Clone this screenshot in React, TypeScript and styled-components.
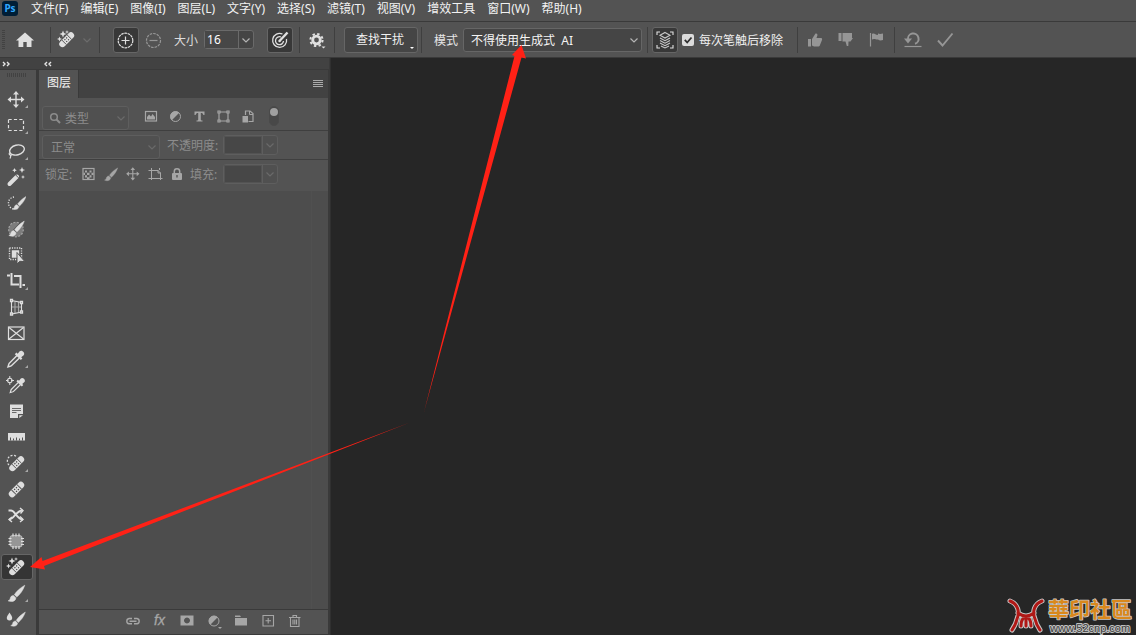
import React from "react";
import styled, { createGlobalStyle, css } from "styled-components";

const Global = createGlobalStyle`
  * { box-sizing: border-box; }
  body { margin: 0; background: #262626; }
  body, button, input, select {
    font-family: "Noto Sans", "Noto Sans CJK SC", sans-serif;
    font-size: 12px;
  }
  button { padding: 0; margin: 0; border: 0; background: none; color: inherit; }
`;

const App = styled.div`
  position: relative;
  display: flex;
  flex-direction: column;
  min-height: 100vh;
  overflow: hidden;
  color: #e6e6e6;
  background: #262626;
`;

/* ---------- menu bar ---------- */
const MenuBar = styled.header`
  display: flex;
  align-items: center;
  height: 22px;
  padding: 0 2px 4px;
  background: #535353;
  border-bottom: 1px solid #3a3a3a;
  flex: none;
`;
const AppBadge = styled.span`
  width: 16px;
  height: 15px;
  margin-right: 13px;
  border-radius: 3px;
  background: #001e36;
  color: #31a8ff;
  font: bold 10px/15px "Noto Sans", sans-serif;
  text-align: center;
`;
const Menus = styled.nav`
  display: flex;
  gap: 12px;
`;
const MenuItem = styled.button`
  line-height: 16px;
  white-space: nowrap;
  color: #f2f2f2;
`;

/* ---------- options bar ---------- */
const OptionsBar = styled.div`
  display: flex;
  align-items: center;
  height: 36px;
  background: #535353;
  border-bottom: 1px solid #3a3a3a;
  flex: none;
`;
const Group = styled.div<{ $pad: string; $gap?: number; $last?: boolean }>`
  display: flex;
  align-items: center;
  height: 26px;
  flex: none;
  padding: ${(p) => p.$pad};
  gap: ${(p) => p.$gap ?? 0}px;
  border-right: ${(p) => (p.$last ? "0" : "1px solid #3f3f3f")};
`;
const Grip = styled.span`
  width: 3px;
  height: 20px;
  background: repeating-linear-gradient(#424242 0 1px, transparent 1px 2px);
`;
const IconButton = styled.button<{ $on?: boolean; $wide?: boolean; $dim?: boolean }>`
  display: flex;
  align-items: center;
  justify-content: center;
  width: ${(p) => (p.$wide ? 26 : 20)}px;
  height: 26px;
  flex: none;
  border-radius: 3px;
  color: ${(p) => (p.$dim ? "#969696" : "#e0e0e0")};
  ${(p) =>
    p.$on &&
    css`
      background: #383838;
      border: 1px solid #666;
    `}
`;
const Field = styled.label`
  display: flex;
  align-items: center;
  gap: 6px;
  margin: 0 12px 0 7px;
  color: #dcdcdc;
  white-space: nowrap;
`;
const Combo = styled.span<{ $w: number; $dim?: boolean }>`
  display: flex;
  width: ${(p) => p.$w}px;
  height: ${(p) => (p.$dim ? 20 : 19)}px;
  border: 1px solid ${(p) => (p.$dim ? "#5e5e5e" : "#6a6a6a")};
  border-radius: 3px;
  background: ${(p) => (p.$dim ? "#505050" : "#454545")};
  input {
    flex: 1;
    min-width: 0;
    height: 100%;
    padding: 0 2px;
    border: ${(p) => (p.$dim ? "1px solid #535353" : "0")};
    background: #474747;
    color: #fff;
    outline: 0;
  }
  button {
    display: flex;
    align-items: center;
    justify-content: center;
    width: 15px;
    border-left: 1px solid ${(p) => (p.$dim ? "#5e5e5e" : "#6a6a6a")};
  }
`;
const PushButton = styled.button`
  display: flex;
  align-items: center;
  justify-content: center;
  position: relative;
  width: 74px;
  height: 26px;
  padding-bottom: 1px;
  padding-right: 2px;
  border: 1px solid #666;
  border-radius: 3px;
  background: #454545;
  color: #f0f0f0;
`;
const Corner = styled.i`
  position: absolute;
  right: 3px;
  bottom: 3px;
  border-top: 2px solid #fff;
  border-left: 2px solid transparent;
  border-right: 2px solid transparent;
`;
const SelectBox = styled.span<{ $w: number; $dim?: boolean }>`
  display: grid;
  align-items: center;
  width: ${(p) => p.$w}px;
  height: 24px;
  flex: none;
  color: ${(p) => (p.$dim ? "#8c8c8c" : "#f4f4f4")};
  > * { grid-area: 1 / 1; }
  > svg:last-child { justify-self: end; margin-right: 3px; pointer-events: none; }
  > svg:nth-last-child(3) { z-index: 1; margin-left: 4px; }
`;
const Select = styled.select<{ $pl: number; $dim?: boolean }>`
  appearance: none;
  width: 100%;
  height: 24px;
  padding: ${(p) => (p.$dim ? 0 : 2)}px 0 0 ${(p) => p.$pl}px;
  border: 1px solid ${(p) => (p.$dim ? "#5e5e5e" : "#666")};
  border-radius: 3px;
  background: ${(p) => (p.$dim ? "#505050" : "#454545")};
  color: inherit;
`;
const CheckLabel = styled.label`
  display: flex;
  align-items: center;
  gap: 5px;
  white-space: nowrap;
  color: #f0f0f0;
  input {
    appearance: none;
    width: 12px;
    height: 12px;
    margin: 0;
    border-radius: 2px;
    background: #dcdcdc;
  }
`;
const Tick = styled.span`
  display: grid;
  > * { grid-area: 1 / 1; }
  svg { pointer-events: none; }
`;

/* ---------- work area ---------- */
const Work = styled.div`
  display: flex;
  flex: 1;
`;
const Docks = styled.div`
  display: grid;
  grid-template-columns: 36px 291px;
  grid-template-rows: 12px 1fr;
  column-gap: 2px;
  flex: none;
  padding-right: 1px;
  background: #3a3a3a;
  border-right: 1px solid #303030;
`;
const DockHead = styled.div`
  display: flex;
  align-items: center;
  grid-column: 1 / 3;
  gap: 31px;
  height: 11px;
  padding-left: 2px;
  background: #424242;
`;
const Tools = styled.aside`
  display: flex;
  flex-direction: column;
  background: #535353;
  padding-left: 1px;
`;
const ToolsGrip = styled.span`
  width: 20px;
  height: 4px;
  margin: 3px 0 9px 6px;
  background: repeating-linear-gradient(90deg, #424242 0 1px, transparent 1px 2px);
`;
const Tool = styled.button<{ $on?: boolean; $more?: boolean }>`
  display: flex;
  align-items: center;
  justify-content: center;
  position: relative;
  width: 32px;
  height: 26px;
  flex: none;
  padding-right: 2px;
  color: #dedede;
  border: 1px solid ${(p) => (p.$on ? "#666" : "transparent")};
  border-radius: 3px;
  background: ${(p) => (p.$on ? "#353535" : "none")};
  ${(p) =>
    p.$more &&
    css`
      &::after {
        content: "";
        position: absolute;
        right: 4px;
        bottom: 3px;
        border-bottom: 3px solid #a8a8a8;
        border-left: 3px solid transparent;
      }
    `}
`;
const Panel = styled.section`
  display: flex;
  flex-direction: column;
  margin: 0 1px 1px;
  background: #4d4d4d;
`;
const Tabs = styled.div`
  display: flex;
  align-items: center;
  justify-content: space-between;
  height: 28px;
  background: #424242;
`;
const Tab = styled.button`
  width: 40px;
  height: 28px;
  padding: 0 0 4px 1px;
  background: #535353;
  border-right: 1px solid #3a3a3a;
  color: #f4f4f4;
`;
const Row = styled.div<{ $h: number; $top: number; $left: number }>`
  display: flex;
  align-items: flex-start;
  height: ${(p) => p.$h}px;
  padding: ${(p) => p.$top}px 0 0 ${(p) => p.$left}px;
  background: #535353;
  border-bottom: 1px solid #3f3f3f;
  color: #8c8c8c;
  &:nth-child(4) { border-bottom-color: #535353; }
`;
const Icons = styled.div<{ $gap: number; $l: number; $r: number }>`
  display: flex;
  gap: ${(p) => p.$gap}px;
  margin: 0 ${(p) => p.$r}px 0 ${(p) => p.$l}px;
  button { display: flex; color: #a6a6a6; }
`;
const RowLabel = styled.label<{ $w: number; $l?: number }>`
  width: ${(p) => p.$w}px;
  margin-left: ${(p) => p.$l ?? 0}px;
  line-height: 22px;
  white-space: nowrap;
`;
const Switch = styled.button`
  width: 10px;
  height: 20px;
  border-radius: 5px;
  background: #484848;
  border: 1px solid #4a4a4a;
  &::before {
    content: "";
    display: block;
    width: 8px;
    height: 8px;
    border-radius: 50%;
    background: #a0a0a0;
    margin-bottom: 8px;
  }
`;
const LayerList = styled.div`
  flex: 1;
  margin-right: 16px;
  border-right: 1px solid #505050;
`;
const PanelFoot = styled.div`
  display: flex;
  align-items: center;
  gap: 7px;
  height: 25px;
  padding: 0 0 2px 84px;
  background: #535353;
  border-top: 1px solid #3a3a3a;
  button { display: flex; color: #a6a6a6; }
`;
const Canvas = styled.main`
  flex: 1;
  background: #262626;
`;
const Arrows = styled.svg`
  position: absolute;
  left: 0;
  top: 0;
  pointer-events: none;
`;
const Watermark = styled.svg`
  position: absolute;
  right: 0;
  bottom: 0;
`;

/* ---------- icons ---------- */
type IconProps = { children: React.ReactNode; s?: number };
const Icon = ({ children, s = 20 }: IconProps) => (
  <svg width={s} height={s} viewBox={`0 0 ${s} ${s}`} fill="none" stroke="currentColor" strokeWidth="1.4" aria-hidden="true">
    {children}
  </svg>
);
const Solid = ({ d }: { d: string }) => <path d={d} fill="currentColor" stroke="none" />;
const Chevron = ({ color = "#b4b4b4" }: { color?: string }) => (
  <svg width="10" height="10" viewBox="0 0 10 10" fill="none" stroke={color} strokeWidth="1.2" aria-hidden="true">
    <path d="M1.5 3.5 5 7 8.5 3.5" />
  </svg>
);
const Bandage = () => (
  <g transform="rotate(-45 10 10)">
    <rect x="0" y="6.5" width="20" height="7" rx="3.5" fill="currentColor" stroke="none" />
    <path d="M6 6.500v7M14 6.500v7" stroke="#535353" strokeWidth="1" />
    <path d="M8 8.600h1.300M10.700 8.600h1.300M8 11.400h1.300M10.700 11.400h1.300" stroke="#444" strokeWidth="1.300" />
  </g>
);
const Sparkles = () => <Solid d="M6 .5l1 2.500 2.500 1L7 5 6 7.500 5 5 2.500 4 5 3zM2.500 6.500l.7 1.800 1.800.7-1.800.7-.7 1.800-.7-1.800L0 9l1.800-.7zM10 0l.5 1.500 1.500.5-1.500.5L10 4l-.5-1.500L8 2l1.500-.5z" />;
const Brush = () => <path stroke="currentColor" strokeWidth=".5" fill="currentColor" d="M18.800 1.200C14 4 10.300 7.500 8.300 10.700l2.500 2.400C14 10.500 17.300 6 18.800 1.200zM7.500 11.500c-2 0-3 1.300-3.300 3-.2 1.200-.9 2-2.200 2.300 3 1.400 7.500 1 7.900-2.900z" />;
const Dropper = () => (
  <g>
    <path d="M11 6.500 3.300 14.200c-.8.8-.8 2.300-1.300 3.600 1.300-.4 2.800-.5 3.600-1.300L13.400 8.900" />
    <Solid d="M8.800 5.200l1.600-1.600 1.300 1.200 2-2.500c1.900-2 6 1.500 4 3.900l-2.500 2 1.200 1.300-1.600 1.600z" />
  </g>
);
const Move = () => (
  <g>
    <path d="M10 3.500v13M3.500 10h13" />
    <Solid d="M10 1.500l3 3.500H7zM10 18.500l3-3.500H7zM1.500 10 5 7v6zM18.500 10 15 7v6z" />
  </g>
);

const tools: { name: string; art: React.ReactNode; more?: boolean; on?: boolean }[] = [
  { name: "移动", more: true, art: <g transform="translate(0 .5)"><Move /></g> },
  { name: "矩形选框", more: true, art: <rect x="2.5" y="4.5" width="15" height="11" strokeDasharray="3.2 2.2" strokeWidth="1.2" /> },
  { name: "套索", more: true, art: <g><ellipse cx="11" cy="9" rx="7.5" ry="4.9" transform="rotate(-14 11 9)" /><path d="M4 11.500c-2.500 2 1.500 3.700 2.300 1.700M4.500 13.500c.5 2 .3 3-.7 4" strokeWidth="1.200" /></g> },
  { name: "魔棒", art: <g><path d="M3.500 17 11 9.500" strokeWidth="4" strokeLinecap="round" /><path d="M9.500 7.800l3 3" stroke="#535353" strokeWidth="1" /><Solid d="M8.500 1l.7 1.600 1.600.7-1.600.7-.7 1.600L7.800 4l-1.600-.7 1.600-.7zM16 0l.9 2.200 2.200.8-2.200.8L16 6l-.9-2.200L13 3l2.100-.8zM17 8l.6 1.400 1.400.6-1.400.6L17 12l-.6-1.400L15 10l1.400-.6z" /></g> },
  { name: "快速选择", art: <g><path d="M8 4a6 6 0 1 0 1 12" strokeDasharray="1.200 1.400" /><g transform="translate(5 2.500) scale(.8)"><Brush /></g></g> },
  { name: "选择画笔", art: <g><circle cx="10" cy="10.500" r="7.300" fill="#7c7c7c" strokeDasharray="2 1.500" stroke="#a5a5a5" strokeWidth="1.200" /><g transform="translate(1 1) scale(.92)"><path d="M18 2 6 15" stroke="#535353" strokeWidth="5" /><Brush /></g></g> },
  { name: "对象选择", art: <g><rect x="3.500" y="3" width="12" height="11.500" strokeDasharray="1.200 1.200" /><path d="M6.500 6h6v6h-6z" fill="currentColor" /><path d="M11 7.500v11.500l2.800-2.700 5 .3z" fill="currentColor" stroke="#535353" strokeWidth="1" /></g> },
  { name: "裁剪", more: true, art: <path d="M1 4.500h3M5.500 2v11.500H13M8 5h6.500v12M16.500 14h2.500" strokeWidth="2" /> },
  { name: "透视裁剪", art: <g strokeWidth="1.100"><path d="M9 4.500v11.500M12.500 5v10.500M5.500 10h10" stroke="#a8a8a8" /><path d="M5.500 3.500 15.500 5.500v9.500L5.500 17z" /><path d="M4.500 2.500h2v2h-2zM14.500 4.500h2v2h-2zM14.500 14h2v2h-2zM4.500 16h2v2h-2z" fill="#535353" strokeWidth="1.300" /></g> },
  { name: "图框", art: <g strokeWidth="1.200"><rect x="2.500" y="4" width="15.500" height="12.500" /><path d="M3 4.500 17.500 16M17.500 4.500 3 16" /></g> },
  { name: "吸管", more: true, art: <Dropper /> },
  { name: "颜色取样", art: <g><g transform="translate(2.500 1.500) scale(.9)"><Dropper /></g><circle cx="3.800" cy="5.500" r="2.200" strokeWidth="1.100" /><path d="M3.800 1v3M3.800 7v3M-.5 5.500h3M5 5.500h3" strokeWidth="1" /></g> },
  { name: "注释", art: <g><Solid d="M4 3.500h13v9.500h-5v4H4zM13.300 14.300H17L13.300 17z" /><path d="M6 7.500h9M6 9.500h9M6 11.500h4.500" stroke="#6a6a6a" strokeWidth="1" /></g> },
  { name: "标尺", art: <g><Solid d="M2 6h17v7.500H2z" /><path d="M4.500 10.500v3M7.500 11.500v2M10.500 10.500v3M13.500 11.500v2M16.500 10.500v3" stroke="#535353" strokeWidth="1" /></g> },
  { name: "污点修复", more: true, art: <g><path d="M3 12a5.200 5.200 0 1 1 8-8" strokeDasharray="2 1.500" strokeWidth="1.200" /><g transform="translate(1.500 1.500) scale(.92)"><Bandage /></g></g> },
  { name: "修复画笔", art: <g transform="translate(1 1) scale(.95)"><Bandage /></g> },
  { name: "内容感知移动", art: <g strokeWidth="1.900"><path d="M2.500 5.500H5C9 5.500 11 14.500 17 14.500M3 14.500c5 0 7-9 13.500-9" /><path d="M14 3l3 2.500-2.500 3M14 11.500l3 3-3 2.500M6 12l-3 2.500L6 17" strokeWidth="1.400" /></g> },
  { name: "修补", art: <g strokeWidth="1.200"><rect x="4" y="4.500" width="12" height="11.500" rx="3" fill="#969696" stroke="#b5b5b5" /><path d="M7 2.500v3M10 2.500v3M13 2.500v3M7 15v3M10 15v3M13 15v3M2.500 7.500h3M2.500 10.500h3M2.500 13.500h3M15 7.500h3M15 10.500h3M15 13.500h3" /></g> },
  { name: "移除", on: true, art: <g><Sparkles /><g transform="translate(1.500 1.500) scale(.92)"><Bandage /></g></g> },
  { name: "画笔", more: true, art: <g transform="translate(0 1)"><Brush /></g> },
  { name: "混合器画笔", art: <g transform="translate(0 1)"><Solid d="M3.500 2.500c1.500 2.500 2.700 3.700 2.700 5.300a2.700 2.700 0 0 1-5.400 0c0-1.600 1.200-2.800 2.700-5.300z" /><g transform="translate(3 1) scale(.87)"><Brush /></g></g> },
];

const menus = ["文件(F)", "编辑(E)", "图像(I)", "图层(L)", "文字(Y)", "选择(S)", "滤镜(T)", "视图(V)", "增效工具", "窗口(W)", "帮助(H)"];

const filters: [string, React.ReactNode][] = [
  ["像素图层", <g><rect x="4.500" y="5.500" width="11" height="9.500" strokeWidth="1.200" /><Solid d="M6 13.500V11l2-2.500 2 2L11.500 8l2.500 3v2.500z" /></g>],
  ["调整图层", <g><circle cx="10.500" cy="10.500" r="5" strokeWidth="1" /><Solid d="M14.200 6.800A5.200 5.200 0 0 0 6.800 14.200z" /></g>],
  ["文字图层", <Solid d="M5.500 5.500h10V9h-1.200c-.2-1.300-.9-1.900-2.500-1.900v6.400c0 .8.3 1 1.700 1v1H7.500v-1c1.400 0 1.700-.2 1.700-1V7.100C7.600 7.100 6.900 7.700 6.700 9H5.500z" />],
  ["形状图层", <g strokeWidth="1.200"><path d="M6 6h9v9H6z" /><path d="M5 5h2v2H5zM14 5h2v2h-2zM14 14h2v2h-2zM5 14h2v2H5z" fill="#535353" /></g>],
  ["智能对象", <g><path d="M8.500 9V5h4.500L16 7.500V15.500h-4.500" strokeWidth="1.200" /><path d="M12.500 5v3.500H16" strokeWidth="1" /><Solid d="M5.500 10H11v6.500H5.500z" /></g>],
];
const locks: [string, React.ReactNode][] = [
  ["锁定透明像素", <g><rect x="4" y="4.500" width="11" height="11" strokeWidth="1.200" /><Solid d="M6 6.500h2v2H6zM10.500 6.500h2v2h-2zM8 8.800h2.500v2.200H8zM12.500 8.800h2V11h-2zM6 11.200h2v2.200H6zM10.500 11.200h2v2.200h-2zM4.500 8.800H6V11H4.500zM8 13.300h2.500v2H8z" /></g>],
  ["锁定图像像素", <g transform="translate(2 3) scale(.78)"><Brush /></g>],
  ["锁定位置", <g transform="translate(2 2) scale(.78)"><Move /></g>],
  ["防止自动嵌套", <path d="M6.500 4v12M3.500 6.500H13l2.500 2.500v7M3.500 14.500h14M13 6v3h3M14.500 4v2" strokeWidth="1" />],
  ["锁定全部", <g><rect x="5" y="9" width="10" height="7" rx="1" fill="currentColor" stroke="none" /><path d="M7.300 9V7.500a2.700 2.700 0 0 1 5.400 0V9" strokeWidth="1.500" /><path d="M10 11v2.500" stroke="#535353" /></g>],
];
const footers: [string, React.ReactNode][] = [
  ["链接图层", <path d="M9 7.500H6a2.700 2.700 0 0 0 0 5.300h3M11 7.500h3a2.700 2.700 0 0 1 0 5.300h-3M6.500 10.200h7" />],
  ["图层样式", <g><text x="4" y="14" fill="currentColor" stroke="currentColor" strokeWidth=".3" fontSize="14" fontStyle="italic" fontFamily="Liberation Sans, sans-serif">fx</text></g>],
  ["图层蒙版", <path d="M3.500 4.500h13v10h-13zM10 6.500a3 3 0 1 0 .01 0z" fill="currentColor" fillRule="evenodd" stroke="none" />],
  ["调整图层", <g><circle cx="10" cy="10" r="5" strokeWidth="1" /><Solid d="M13.700 6.300A5.200 5.200 0 0 0 6.300 13.700zM14 16h4l-2 2z" /></g>],
  ["新建组", <Solid d="M4 4.500h5l1 1.500H4zM4 7h12v7.500H4z" />],
  ["新建图层", <path d="M5 4.500h10.500V15H5zM7.500 9.700h5.500M10.200 7v5.500" strokeWidth="1.100" />],
  ["删除图层", <path d="M4 6.500h11.500M8 6V4.500h3.500V6M5.500 7v8.500H14V7M8 8.500v5M9.800 8.500v5M11.500 8.500v5" strokeWidth="1.100" />],
];

const markPath = "M10 8C18 11 20 19 17 26C16 31 14 34 12 37M42 8C34 11 32 19 35 26C36 31 38 34 40 37M18 20Q26 26 34 20M21 33Q21 25 26 24Q31 25 31 33M26 24V33";

export default function Editor() {
  return (
    <App>
      <Global />
      <MenuBar>
        <AppBadge>Ps</AppBadge>
        <Menus>{menus.map((m) => <MenuItem key={m}>{m}</MenuItem>)}</Menus>
      </MenuBar>

      <OptionsBar>
        <Group $pad="0 15px 0 2px" $gap={10}>
          <Grip />
          <IconButton aria-label="主页"><Icon><Solid d="M10 2.500 19 10.500h-2.500V17h-4.800v-5H8.300v5H3.500v-6.500H1z" /></Icon></IconButton>
        </Group>
        <Group $pad="0 7px 0 5px" $gap={6}>
          <IconButton aria-label="移除工具"><Icon><g transform="translate(1 0)"><Sparkles /></g><g transform="translate(1.500 .5) scale(.92)"><Bandage /></g></Icon></IconButton>
          <Chevron color="#6c6c6c" />
        </Group>
        <Group $pad="0 6px 0 13px" $gap={1}>
          <IconButton $on $wide aria-label="添加"><Icon><circle cx="9.500" cy="10.500" r="7.300" strokeDasharray="2.600 .7" strokeWidth="1.200" /><path d="M9.500 6.500v8M5.500 10.500h8" strokeWidth="1.200" /></Icon></IconButton>
          <IconButton $wide $dim aria-label="减去"><Icon><circle cx="10.500" cy="10.500" r="7" strokeDasharray="2.600 1" strokeWidth="1.200" /><path d="M6.500 10.500h8" strokeWidth="1.200" /></Icon></IconButton>
          <Field>
            大小
            <Combo $w={50}>
              <input defaultValue="16" />
              <button aria-label="大小选项"><Chevron /></button>
            </Combo>
          </Field>
          <IconButton $on $wide aria-label="压力控制大小"><Icon><path d="M12.500 4A7 7 0 1 0 16.500 9M11 7a4 4 0 1 0 2.500 4" strokeWidth="1.300" /><path d="M9.500 11 17.500 2.500" strokeWidth="2.400" /><circle cx="9.500" cy="11" r="1.200" fill="currentColor" stroke="none" /></Icon></IconButton>
        </Group>
        <Group $pad="0 7px">
          <IconButton aria-label="设置"><Icon><circle cx="9.500" cy="10" r="3.800" strokeWidth="2.800" /><circle cx="9.500" cy="10" r="6.100" strokeWidth="2" strokeDasharray="2.400 2.390" /><Solid d="M14.500 16.500h4l-2 2z" /></Icon></IconButton>
        </Group>
        <Group $pad="0 3px 0 9px">
          <PushButton>查找干扰<Corner /></PushButton>
        </Group>
        <Group $pad="0 5px 0 12px" $gap={5}>
          <label htmlFor="mode">模式</label>
          <SelectBox $w={179}>
            <Select id="mode" $pl={7}><option>不得使用生成式&nbsp; AI</option></Select>
            <Chevron />
          </SelectBox>
        </Group>
        <Group $pad="0 14px 0 4px" $gap={4}>
          <IconButton $on $wide aria-label="对所有图层取样"><Icon><g strokeWidth="1.100"><path d="M2 5V2h3M15 2h3v3M18 15v3h-3M5 18H2v-3" /><path d="M10 2.500 15 5.300 10 8 5 5.300zM5 8l5 2.700L15 8M5 10.500l5 2.700 5-2.700M5 13l5 2.700 5-2.700M6 16l4 2 4-2" stroke="#c8c8c8" /></g></Icon></IconButton>
          <CheckLabel>
            <Tick>
              <input type="checkbox" defaultChecked />
              <svg width="12" height="12" viewBox="0 0 12 12" fill="none" stroke="#303030" strokeWidth="1.800" aria-hidden="true"><path d="M2.800 5.800 5.200 8.500 9.500 3.500" /></svg>
            </Tick>
            每次笔触后移除
          </CheckLabel>
        </Group>
        <Group $pad="0 9px 0 7px" $gap={10}>
          <IconButton $dim aria-label="赞"><Icon><Solid d="M3 9h3v7.500H3zM7 9l3.500-5.500c1.500-.5 2.300.7 1.800 2.200L11.500 8H16c1.500 0 1.300 1.500.8 2.500l-2 5c-.3.8-1 1-1.800 1H9l-2-1z" /></Icon></IconButton>
          <IconButton $dim aria-label="踩"><Icon><Solid d="M3.500 3h3v8h-3zM7.500 3H17v5h1l-2.500 3.500h-2L13.300 16h-1.500L10.500 11.500h-3z" /></Icon></IconButton>
          <IconButton $dim aria-label="标记"><Icon><path d="M5.500 3v13.500" strokeWidth="1.200" /><Solid d="M7 4c2.500-1.500 4 1.500 6 .8V3.500c1.500.7 3 .5 5 0V10c-2 .7-3.500.7-5-.5-2 .5-3.500-1.500-6 0z" /></Icon></IconButton>
        </Group>
        <Group $pad="0 8px" $gap={12} $last>
          <IconButton $dim aria-label="还原"><Icon><path d="M5 9.500a5.300 5.300 0 1 1 7 4.300" strokeWidth="2" /><Solid d="M1 8.500h8L5 13.500z" /><path d="M1.500 16.500h17" strokeWidth="1.200" /></Icon></IconButton>
          <IconButton $dim aria-label="提交"><Icon><path d="M3 10.500 7.500 15.500 17.500 3.500" strokeWidth="1.900" /></Icon></IconButton>
        </Group>
      </OptionsBar>

      <Work>
        <Docks>
          <DockHead>
            <Icon s={10}><path d="M1 3l2 2-2 2M5 3l2 2-2 2" /></Icon>
            <Icon s={10}><path d="M4 3 2 5l2 2M8 3 6 5l2 2" /></Icon>
          </DockHead>
          <Tools>
            <ToolsGrip />
            {tools.map((t) => (
              <Tool key={t.name} $on={t.on} $more={t.more} aria-label={t.name}><Icon>{t.art}</Icon></Tool>
            ))}
          </Tools>
          <Panel>
            <Tabs>
              <Tab>图层</Tab>
              <IconButton $dim aria-label="面板菜单"><Icon><path d="M5 6.500h10M5 8.500h10M5 10.500h10M5 12.500h10" strokeWidth="1" stroke="#aaa" /></Icon></IconButton>
            </Tabs>
            <Row $h={33} $top={8} $left={3}>
              <SelectBox $w={87} $dim>
                <Icon><circle cx="8" cy="9" r="3.300" strokeWidth="1.500" /><path d="M10.500 11.500 14 15" strokeWidth="2" /></Icon>
                <Select $pl={22} $dim aria-label="图层过滤"><option>类型</option></Select>
                <Chevron color="#6a6a6a" />
              </SelectBox>
              <Icons $gap={4} $l={12} $r={12}>
                {filters.map(([n, a]) => <button key={n} aria-label={n}><Icon>{a}</Icon></button>)}
              </Icons>
              <Switch aria-label="过滤开关" />
            </Row>
            <Row $h={29} $top={4} $left={3}>
              <SelectBox $w={118} $dim>
                <Select $pl={8} $dim aria-label="混合模式"><option>正常</option></Select>
                <Chevron color="#6a6a6a" />
              </SelectBox>
              <RowLabel $w={56} $l={7} htmlFor="opacity">不透明度:</RowLabel>
              <Combo $w={55} $dim><input id="opacity" /><button aria-label="不透明度选项"><Chevron color="#6a6a6a" /></button></Combo>
            </Row>
            <Row $h={31} $top={4} $left={6}>
              <RowLabel as="span" $w={34}>锁定:</RowLabel>
              <Icons $gap={2} $l={0} $r={3}>
                {locks.map(([n, a]) => <button key={n} aria-label={n}><Icon>{a}</Icon></button>)}
              </Icons>
              <RowLabel $w={33} htmlFor="fill">填充:</RowLabel>
              <Combo $w={55} $dim><input id="fill" /><button aria-label="填充选项"><Chevron color="#6a6a6a" /></button></Combo>
            </Row>
            <LayerList />
            <PanelFoot>
              {footers.map(([n, a]) => <button key={n} aria-label={n}><Icon>{a}</Icon></button>)}
            </PanelFoot>
          </Panel>
        </Docks>
        <Canvas />
      </Work>

      <Arrows width="560" height="600" viewBox="0 0 560 600" fill="#ff2116" aria-hidden="true">
        <path d="M424 412 514.500 56 512 55 521.500 45 526 58.500 521.500 57.500z" />
        <path d="M410 422.500 44 566 45 569.500 30 567 41.500 557 42.500 561z" />
      </Arrows>

      <Watermark width="136" height="42" viewBox="0 0 136 42" aria-hidden="true">
        <g strokeLinecap="round" fill="none">
          <path d={markPath} stroke="#c8c8c8" strokeWidth="5" />
          <path d={markPath} stroke="#b01816" strokeWidth="3" />
        </g>
        <g paintOrder="stroke" strokeLinejoin="round">
          <text x="48" y="24" fontSize="21" fontWeight="700" fontFamily="Noto Sans CJK TC, sans-serif" fill="#d9881c" stroke="#c8c8c8" strokeWidth="1.5">華印社區</text>
          <text x="50" y="39" fontSize="11" fontFamily="Liberation Sans, sans-serif" fill="#3c3c3c" stroke="#c0c0c0" strokeWidth="2">www.52cnp.com</text>
        </g>
      </Watermark>
    </App>
  );
}
